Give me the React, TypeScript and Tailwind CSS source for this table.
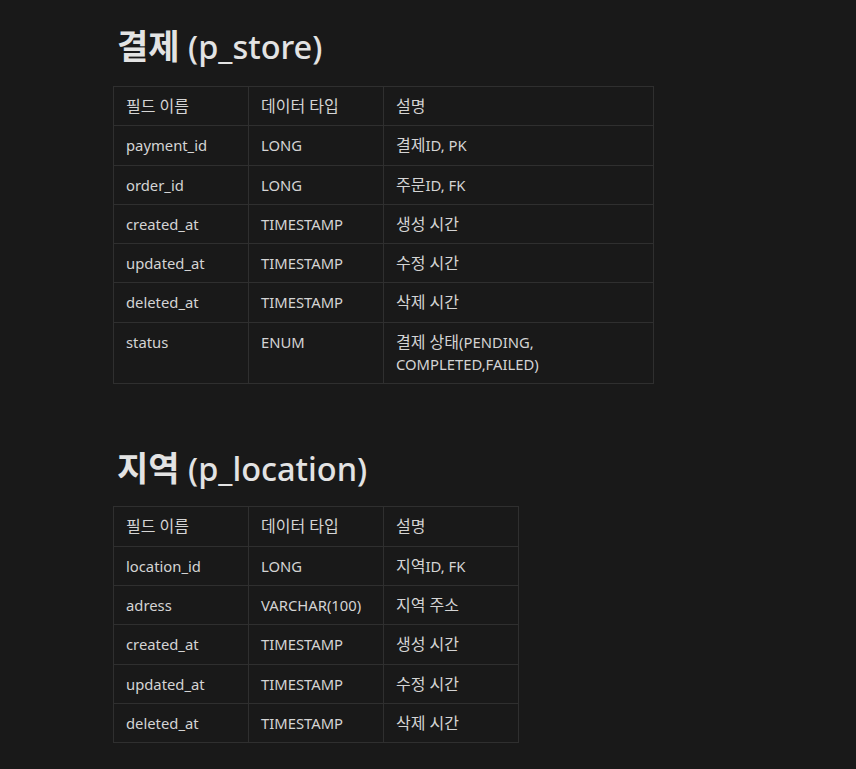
const font = "font-['Noto_Sans','Noto_Sans_CJK_KR',sans-serif]";

type Row = [string, string, string];

const storeRows: Row[] = [
  ['payment_id', 'LONG', '결제ID, PK'],
  ['order_id', 'LONG', '주문ID, FK'],
  ['created_at', 'TIMESTAMP', '생성 시간'],
  ['updated_at', 'TIMESTAMP', '수정 시간'],
  ['deleted_at', 'TIMESTAMP', '삭제 시간'],
  ['status', 'ENUM', '결제 상태(PENDING,\nCOMPLETED,FAILED)'],
];

const locationRows: Row[] = [
  ['location_id', 'LONG', '지역ID, FK'],
  ['adress', 'VARCHAR(100)', '지역 주소'],
  ['created_at', 'TIMESTAMP', '생성 시간'],
  ['updated_at', 'TIMESTAMP', '수정 시간'],
  ['deleted_at', 'TIMESTAMP', '삭제 시간'],
];

// Korean runs render a bit larger than the latin text, as in the original font
function Mixed({ text }: { text: string }) {
  const parts = text.split(/([\uAC00-\uD7A3]+(?: [\uAC00-\uD7A3]+)*)/);
  return (
    <>
      {parts.map((p, i) =>
        /[\uAC00-\uD7A3]/.test(p) ? (
          <span key={i} className="text-[16px] leading-[16px]">
            {p}
          </span>
        ) : (
          <span key={i}>{p}</span>
        )
      )}
    </>
  );
}

function Cell({ text, wide }: { text: string; wide?: boolean }) {
  return (
    <td
      className={`border border-[#2f2f2f] px-3 py-2 align-top text-[14.8px] leading-[22.3px] text-[#d4d4d4] ${
        wide ? 'w-[270px]' : 'w-[135px]'
      }`}
    >
      {text.split('\n').map((line, i) => (
        <div key={i}>
          <Mixed text={line} />
        </div>
      ))}
    </td>
  );
}

function SchemaTable({ rows, wideLast }: { rows: Row[]; wideLast?: boolean }) {
  return (
    <table className="table-fixed border-collapse">
      <tbody>
        <tr>
          <Cell text="필드 이름" />
          <Cell text="데이터 타입" />
          <Cell text="설명" wide={wideLast} />
        </tr>
        {rows.map((r) => (
          <tr key={r[0]}>
            <Cell text={r[0]} />
            <Cell text={r[1]} />
            <Cell text={r[2]} wide={wideLast} />
          </tr>
        ))}
      </tbody>
    </table>
  );
}

function Heading({ ko, en, className = '' }: { ko: string; en: string; className?: string }) {
  return (
    <h1 className={`pl-[4px] text-[32.5px] font-medium leading-[39px] text-[#e3e3e3] ${className}`}>
      <span className="text-[34px] font-bold leading-[34px]">{ko}</span> {en}
    </h1>
  );
}

export default function App() {
  return (
    <main className={`min-h-screen w-full bg-[#191919] ${font}`}>
      <div className="pl-[113px] pt-[27px] pb-[26px]">
        {/* 결제 */}
        <Heading ko="결제" en="(p_store)" />
        <div className="mt-[20px]">
          <SchemaTable rows={storeRows} wideLast />
        </div>

        {/* 지역 */}
        <Heading ko="지역" en="(p_location)" className="mt-[65px]" />
        <div className="mt-[18px]">
          <SchemaTable rows={locationRows} />
        </div>
      </div>
    </main>
  );
}
